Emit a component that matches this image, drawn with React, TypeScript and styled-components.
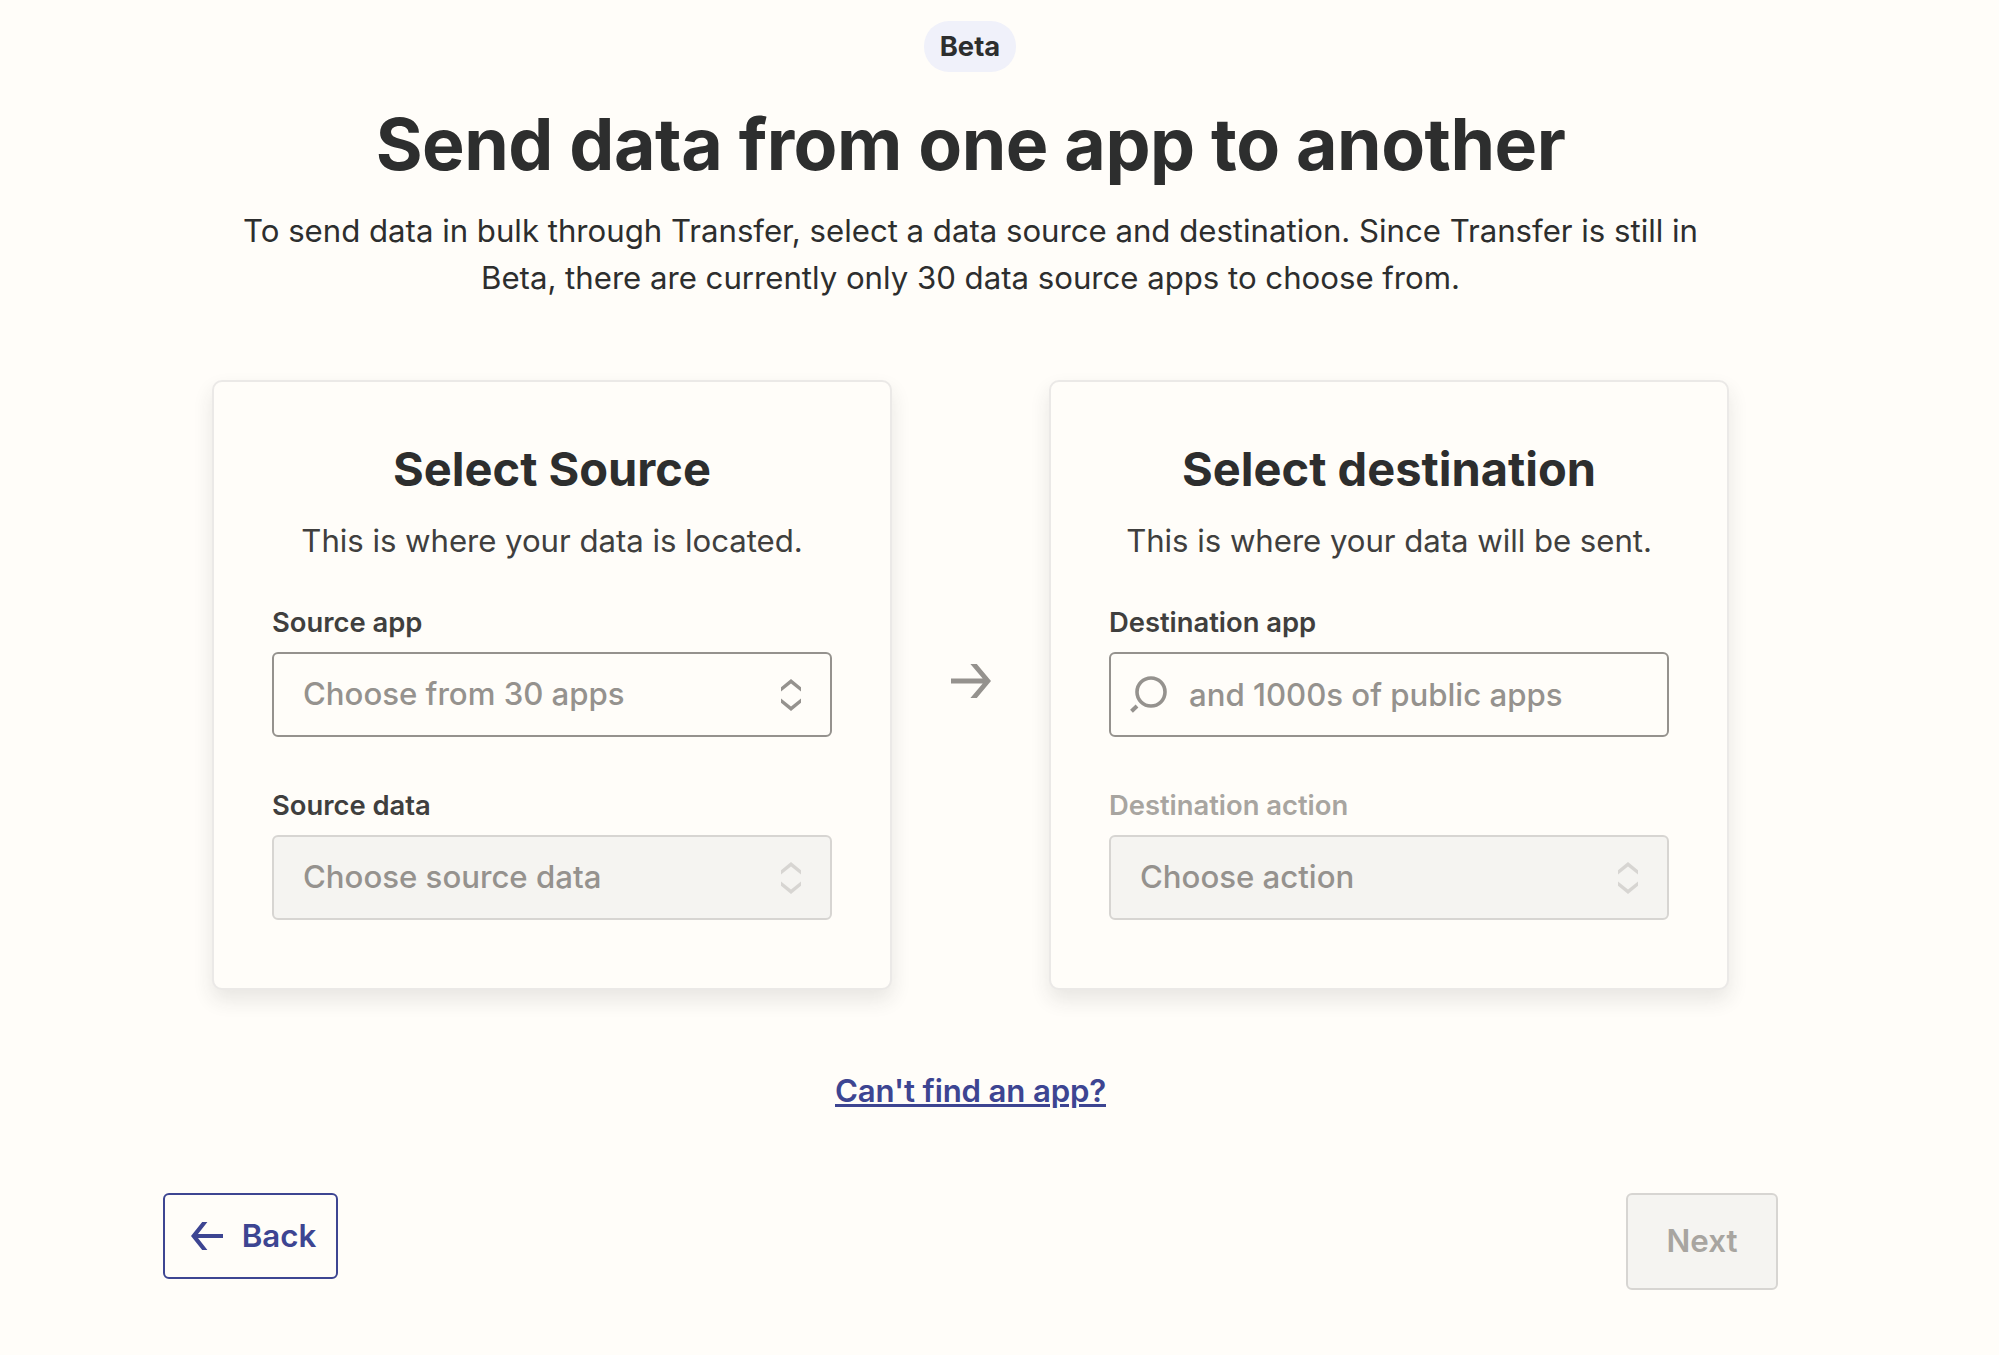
import React from "react";
import styled, { createGlobalStyle } from "styled-components";

const GlobalStyle = createGlobalStyle`
  *, *::before, *::after { box-sizing: border-box; }
  body {
    margin: 0;
    background: #fffdf9;
    color: #2d2e2e;
    font-family: Inter, "Liberation Sans", sans-serif;
    -webkit-font-smoothing: antialiased;
  }
`;

const Page = styled.main`
  width: 1615px;
  height: 1355px;
  margin-left: 163px;
  padding-top: 21px;
  display: flex;
  flex-direction: column;
  align-items: center;
`;

const Badge = styled.span`
  width: 92px;
  height: 51px;
  margin-right: 1px;
  padding-bottom: 1px;
  border-radius: 25px;
  background: #f0f1fa;
  display: flex;
  align-items: center;
  justify-content: center;
  font-size: 27.4px;
  font-weight: 700;
`;

const Heading = styled.h1`
  margin: 32px 0 0;
  font-size: 71.6px;
  line-height: 80px;
  font-weight: 700;
  letter-spacing: -0.5px;
  white-space: nowrap;
`;

const Intro = styled.p`
  margin: 24px 0 0;
  width: 1500px;
  font-size: 31.2px;
  line-height: 47px;
  letter-spacing: -0.02px;
  text-align: center;
`;

const Cards = styled.div`
  margin-top: 78px;
  display: flex;
  align-items: center;
  justify-content: space-between;
  width: 1517px;
`;

const Card = styled.section`
  width: 680px;
  height: 610px;
  padding: 58px 58px 0;
  border: 2px solid #ebe9e7;
  border-radius: 10px;
  background: #fffdf9;
  box-shadow: 0 10px 20px rgba(45, 46, 46, 0.11);
  display: flex;
  flex-direction: column;
`;

const CardTitle = styled.h2`
  margin: 0;
  font-size: 47px;
  line-height: 58px;
  font-weight: 700;
  text-align: center;
`;

const CardText = styled.p`
  margin: 20px 0 0;
  font-size: 31.2px;
  line-height: 47px;
  letter-spacing: -0.05px;
  color: #403f3e;
  text-align: center;
`;

const Field = styled.div<{ $gap: number }>`
  margin-top: ${(p) => p.$gap}px;
`;

const Label = styled.div<{ $muted?: boolean }>`
  font-size: 27.4px;
  line-height: 41px;
  letter-spacing: -0.02px;
  font-weight: 600;
  color: ${(p) => (p.$muted ? "#a8a5a0" : "#403f3e")};
`;

const Control = styled.div<{ $disabled?: boolean; $search?: boolean }>`
  margin-top: 9px;
  height: 85px;
  padding: ${(p) => (p.$search ? "2px 20px 0 19px" : "0 29px 0 29px")};
  border: 2px solid ${(p) => (p.$disabled ? "#d7d5d2" : "#95928e")};
  border-radius: 6px;
  background: ${(p) => (p.$disabled ? "#f5f4f1" : "#fffdf9")};
  color: ${(p) => (p.$disabled ? "#d7d5d2" : "#95928e")};
  display: flex;
  align-items: center;
`;

const Placeholder = styled.span`
  flex: 1;
  font-size: 31.2px;
  line-height: 47px;
  letter-spacing: -0.02px;
  font-weight: 500;
  color: #95928e;
`;

const HelpLink = styled.a`
  margin-top: 78px;
  font-size: 31.2px;
  line-height: 47px;
  letter-spacing: -0.17px;
  font-weight: 600;
  color: #3d4592;
  text-decoration: underline;
  text-decoration-thickness: 3px;
  text-underline-offset: 2px;
`;

const Footer = styled.footer`
  margin-top: 78px;
  width: 100%;
  display: flex;
  align-items: flex-start;
  justify-content: space-between;
`;

const Button = styled.button<{ $variant: "outline" | "disabled" }>`
  width: ${(p) => (p.$variant === "outline" ? 175 : 152)}px;
  height: ${(p) => (p.$variant === "outline" ? 86 : 97)}px;
  padding: ${(p) => (p.$variant === "outline" ? "0 0 0 6px" : "0")};
  border: 2px solid ${(p) => (p.$variant === "outline" ? "#3d4592" : "#d7d5d2")};
  border-radius: 6px;
  background: ${(p) => (p.$variant === "outline" ? "#fffdf9" : "#f5f4f1")};
  color: ${(p) => (p.$variant === "outline" ? "#3d4592" : "#a8a5a0")};
  font: 600 31.3px/47px Inter, "Liberation Sans", sans-serif;
  display: flex;
  align-items: center;
  justify-content: center;
  gap: 19px;
`;

const UpDownIcon = () => (
  <svg width="20" height="32" viewBox="0 0 20 32" fill="currentColor">
    <path d="M10 0 20 8.2v4.4L10 4.4 0 12.6V8.2z" />
    <path d="M10 32 20 23.8v-4.4l-10 8.2-10-8.2v4.4z" />
  </svg>
);

const FlowArrow = styled.svg`
  margin-bottom: 8px;
  color: #95928e;
`;

const ArrowRight = () => (
  <FlowArrow width="40" height="36" viewBox="0 0 40 36" fill="currentColor">
    <path d="M0 15.5h31.7L19.4 1h6.4L40 18 25.8 35h-6.4l12.3-14.5H0z" />
  </FlowArrow>
);

const ArrowLeft = () => (
  <svg width="32" height="28" viewBox="0 0 32 28" fill="currentColor">
    <path d="M32 12H7L16.4 0h-5.2L0 14l11.2 14h5.2L7 16h25z" />
  </svg>
);

const SearchSvg = styled.svg`
  margin: -3px 22px 0 0;
`;

const SearchIcon = () => (
  <SearchSvg width="37" height="38" viewBox="0 0 37 38" fill="none" stroke="currentColor">
    <circle cx="21" cy="17" r="14" strokeWidth="3.6" />
    <path d="M7 31 1.5 36.3" strokeWidth="4" />
  </SearchSvg>
);

type SelectProps = { label: string; placeholder: string; gap: number; disabled?: boolean; muted?: boolean };

const SelectField = ({ label, placeholder, gap, disabled, muted }: SelectProps) => (
  <Field $gap={gap}>
    <Label $muted={muted}>{label}</Label>
    <Control $disabled={disabled}>
      <Placeholder>{placeholder}</Placeholder>
      <UpDownIcon />
    </Control>
  </Field>
);

export default function App() {
  return (
    <>
      <GlobalStyle />
      <Page>
        <Badge>Beta</Badge>
        <Heading>Send data from one app to another</Heading>
        <Intro>
          To send data in bulk through Transfer, select a data source and destination. Since Transfer is still in
          <br />
          Beta, there are currently only 30 data source apps to choose from.
        </Intro>
        <Cards>
          <Card>
            <CardTitle>Select Source</CardTitle>
            <CardText>This is where your data is located.</CardText>
            <SelectField label="Source app" placeholder="Choose from 30 apps" gap={37} />
            <SelectField label="Source data" placeholder="Choose source data" gap={48} disabled />
          </Card>
          <ArrowRight />
          <Card>
            <CardTitle>Select destination</CardTitle>
            <CardText>This is where your data will be sent.</CardText>
            <Field $gap={37}>
              <Label>Destination app</Label>
              <Control $search>
                <SearchIcon />
                <Placeholder>and 1000s of public apps</Placeholder>
              </Control>
            </Field>
            <SelectField label="Destination action" placeholder="Choose action" gap={48} disabled muted />
          </Card>
        </Cards>
        <HelpLink>Can't find an app?</HelpLink>
        <Footer>
          <Button $variant="outline">
            <ArrowLeft />
            Back
          </Button>
          <Button $variant="disabled">Next</Button>
        </Footer>
      </Page>
    </>
  );
}
